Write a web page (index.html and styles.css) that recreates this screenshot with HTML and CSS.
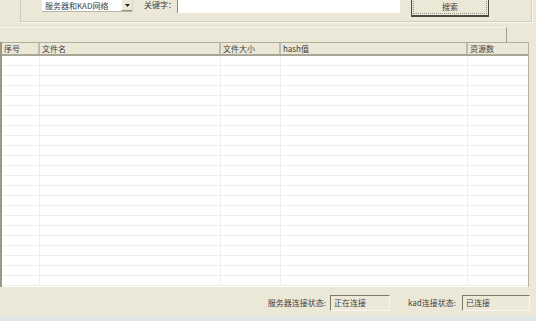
FILE: index.html
```html
<!DOCTYPE html>
<html lang="zh-CN">
  <head>
    <meta charset="UTF-8" />
    <title>搜索</title>
    <link rel="stylesheet" href="styles.css">
  </head>
  <body>
    <div class="window">
      <div class="search-group">
        <div class="combo">
          <span class="combo-text">服务器和KAD网络</span>
          <span class="combo-btn">
            <svg width="5" height="3" viewBox="0 0 5 3"><path d="M0 0h5L2.5 3z" fill="#222" /></svg>
          </span>
        </div>
        <span class="field-label">关键字：</span>
        <div class="keyword-input"></div>
        <button class="search-btn"><span class="focus-ring">搜索</span></button>
      </div>
      <div class="splitter">
        <div class="splitter-edge"></div>
      </div>
      <div class="result-list">
        <div class="list-head">
          <div class="col c-no">序号</div>
          <div class="col c-name">文件名</div>
          <div class="col c-size">文件大小</div>
          <div class="col c-hash">hash值</div>
          <div class="col c-src">资源数</div>
        </div>
        <div class="list-body" id="listBody"></div>
      </div>
      <div class="status-bar">
        <span class="status-label">服务器连接状态:</span>
        <div class="status-box">正在连接</div>
        <span class="status-label kad">kad连接状态:</span>
        <div class="status-box wide">已连接</div>
      </div>
      <div class="bottom-edge"></div>
    </div>
    <script>
      var body = document.getElementById("listBody");
      for (var i = 0; i < 23; i++) {
        var row = document.createElement("div");
        row.className = "list-row";
        ["c-no", "c-name", "c-size", "c-hash", "c-src"].forEach(function (c) {
          var cell = document.createElement("div");
          cell.className = "cell " + c;
          row.appendChild(cell);
        });
        body.appendChild(row);
      }
    </script>
  </body>
</html>
```

FILE: styles.css
```css
body {
  margin: 0;
  padding: 0;
  font-family: "Noto Sans CJK SC", "DejaVu Sans", sans-serif;
  font-size: 8px;
  color: #404040;
}
.window {
  width: 536px;
  height: 321px;
  background: #ebe8d8;
  overflow: hidden;
  display: flex;
  flex-direction: column;
}
.search-group {
  margin-left: 20px;
  width: 489px;
  height: 21px;
  border-left: 1px solid #cfccbb;
  border-right: 1px solid #cfccbb;
  border-bottom: 1px solid #cfccbb;
  box-shadow: 1px 1px 0 #fbfaf4;
  display: flex;
  align-items: flex-start;
  padding-left: 21px;
  box-sizing: content-box;
}
.combo {
  width: 91px;
  height: 12px;
  background: #fff;
  border-bottom: 1px solid #b8b5a6;
  border-right: 1px solid #d8d6c8;
  box-sizing: border-box;
  display: flex;
  align-items: center;
}
.combo-text {
  flex: 1;
  padding-left: 3px;
  line-height: 11px;
  white-space: nowrap;
}
.combo-btn {
  width: 11px;
  height: 11px;
  background: #ece9d8;
  border-left: 1px solid #fff;
  border-bottom: 1px solid #8f8c7c;
  box-sizing: border-box;
  display: flex;
  align-items: center;
  justify-content: center;
}
.field-label {
  margin-left: 11px;
  line-height: 10px;
  width: 33px;
}
.keyword-input {
  width: 223px;
  height: 13px;
  background: #fff;
  border-left: 1px solid #8d8a7b;
  box-sizing: border-box;
}
.search-btn {
  margin-left: 11px;
  width: 78px;
  height: 17px;
  padding: 1px;
  background: #ebe8d8;
  border: 1px solid #4a4a44;
  border-bottom-width: 2px;
  border-top: none;
  font: inherit;
  color: #404040;
  box-sizing: border-box;
}
.focus-ring {
  display: flex;
  align-items: center;
  justify-content: center;
  height: 100%;
  padding-bottom: 1px;
  border: 1px dotted #9a988a;
  border-top: none;
  box-sizing: border-box;
}
.splitter {
  height: 20px;
}
.splitter-edge {
  margin-top: 5px;
  width: 506px;
  height: 15px;
  border-top: 1px solid #f6f5ee;
  border-right: 1px solid #a19e8e;
}
.result-list {
  width: 529px;
  height: 245px;
  background: #fff;
  border-left: 2px solid #9b9888;
  border-right: 1px solid #b5b2a2;
  box-sizing: border-box;
  display: flex;
  flex-direction: column;
}
.list-head {
  display: flex;
  height: 14px;
  background: #ebe8d8;
  border-top: 1px solid #b0ad9d;
  border-bottom: 2px solid #a8a595;
  box-sizing: border-box;
}
.col {
  line-height: 11px;
  padding-left: 2px;
  border-right: 2px solid #bfbcac;
  box-sizing: border-box;
  white-space: nowrap;
}
.c-no { width: 38px; }
.c-name { width: 181px; }
.c-size { width: 60px; }
.c-hash { width: 187px; }
.c-src { flex: 1; border-right: none; }
.list-body {
  flex: 1;
  overflow: hidden;
}
.list-row {
  display: flex;
  height: 10px;
  border-bottom: 1px solid #efeeea;
  box-sizing: border-box;
}
.cell {
  height: 100%;
  border-right: 1px solid #f0efe9;
  box-sizing: border-box;
}
.cell.c-src { border-right: none; }
.status-bar {
  height: 29px;
  display: flex;
  align-items: center;
  justify-content: flex-end;
  padding-right: 6px;
  padding-top: 2px;
  box-sizing: border-box;
}
.status-label {
  margin-right: 4px;
}
.status-label.kad {
  margin-left: 18px;
  margin-right: 6px;
}
.status-box {
  width: 60px;
  height: 16px;
  line-height: 14px;
  padding-left: 3px;
  background: #ece9d8;
  border-top: 1px solid #7e7b6c;
  border-left: 1px solid #7e7b6c;
  border-right: 1px solid #f8f7f0;
  border-bottom: 1px solid #f8f7f0;
  box-sizing: border-box;
}
.status-box.wide {
  width: 68px;
}
.bottom-edge {
  flex: 1;
  background: #dfe7e4;
}
```
